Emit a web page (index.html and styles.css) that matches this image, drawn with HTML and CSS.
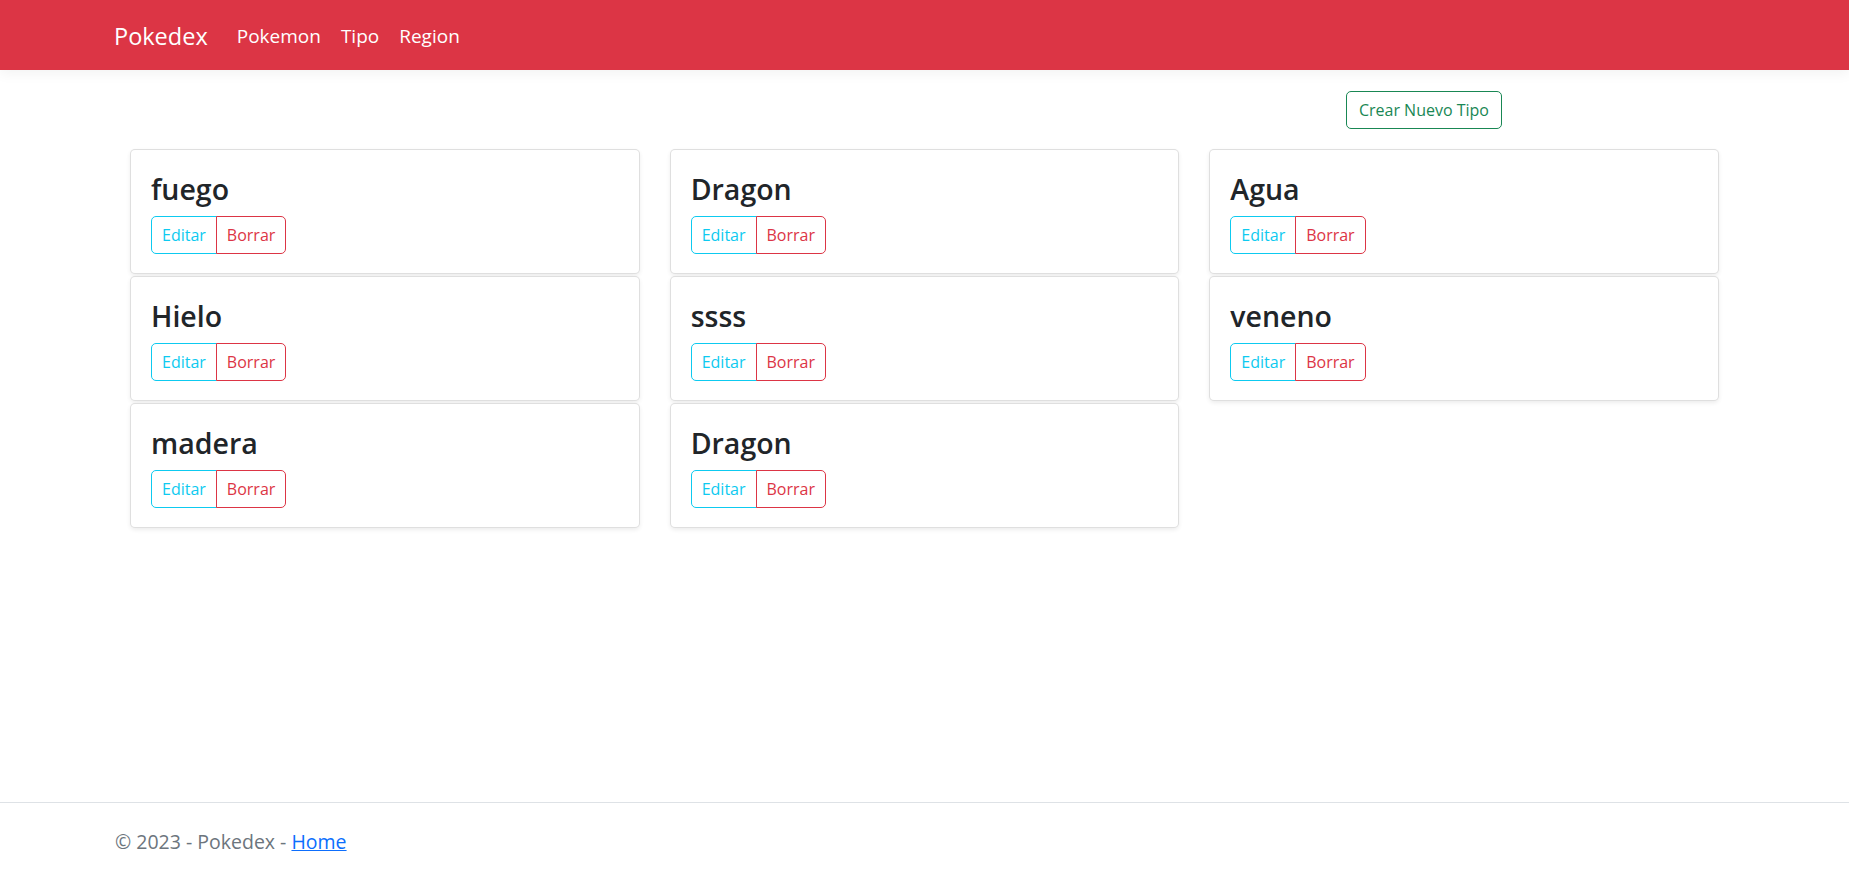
FILE: index.html
```html
<!DOCTYPE html>
<html lang="es">
<head>
<meta charset="utf-8">
<title>Pokedex</title>
<link rel="stylesheet" href="styles.css">
</head>
<body>
<header class="navbar">
  <a class="brand" href="#">Pokedex</a>
  <nav class="nav">
    <a class="nav-link" href="#">Pokemon</a>
    <a class="nav-link" href="#">Tipo</a>
    <a class="nav-link" href="#">Region</a>
  </nav>
</header>
<main class="main">
  <div class="toolbar">
    <a class="btn btn-success" href="#">Crear Nuevo Tipo</a>
  </div>
  <div class="grid">
    <div class="col">
      <div class="card"><h3 class="card-title">fuego</h3><div class="btn-group"><a class="btn btn-info" href="#">Editar</a><a class="btn btn-danger" href="#">Borrar</a></div></div>
      <div class="card"><h3 class="card-title">Hielo</h3><div class="btn-group"><a class="btn btn-info" href="#">Editar</a><a class="btn btn-danger" href="#">Borrar</a></div></div>
      <div class="card"><h3 class="card-title">madera</h3><div class="btn-group"><a class="btn btn-info" href="#">Editar</a><a class="btn btn-danger" href="#">Borrar</a></div></div>
    </div>
    <div class="col">
      <div class="card"><h3 class="card-title">Dragon</h3><div class="btn-group"><a class="btn btn-info" href="#">Editar</a><a class="btn btn-danger" href="#">Borrar</a></div></div>
      <div class="card"><h3 class="card-title">ssss</h3><div class="btn-group"><a class="btn btn-info" href="#">Editar</a><a class="btn btn-danger" href="#">Borrar</a></div></div>
      <div class="card"><h3 class="card-title">Dragon</h3><div class="btn-group"><a class="btn btn-info" href="#">Editar</a><a class="btn btn-danger" href="#">Borrar</a></div></div>
    </div>
    <div class="col">
      <div class="card"><h3 class="card-title">Agua</h3><div class="btn-group"><a class="btn btn-info" href="#">Editar</a><a class="btn btn-danger" href="#">Borrar</a></div></div>
      <div class="card"><h3 class="card-title">veneno</h3><div class="btn-group"><a class="btn btn-info" href="#">Editar</a><a class="btn btn-danger" href="#">Borrar</a></div></div>
    </div>
  </div>
</main>
<footer class="footer">
  <span>&copy; 2023 - Pokedex - <a class="footer-link" href="#">Home</a></span>
</footer>
</body>
</html>
```
FILE: styles.css
```css
* { box-sizing: border-box; }
html, body { margin: 0; padding: 0; }
body {
  font-family: "Segoe UI", "Open Sans", "Noto Sans", sans-serif;
  font-size: 16px;
  color: #212529;
  background: #fff;
  min-height: 100vh;
  display: flex;
  flex-direction: column;
}
a { text-decoration: none; }

.navbar {
  height: 70px;
  background: #dc3545;
  display: flex;
  align-items: center;
  padding: 2px 0 0 114px;
  box-shadow: 0 4px 12px rgba(0,0,0,.05);
}
.brand {
  color: #fff;
  font-size: 23.5px;
  line-height: 30px;
  margin-right: 19px;
}
.nav { display: flex; }
.nav-link {
  color: #fff;
  font-size: 19px;
  line-height: 28px;
  padding: 4px 10px;
}

.main { flex: 1; }
.toolbar {
  display: flex;
  justify-content: flex-end;
  padding: 21px 347px 0 0;
}
.grid {
  display: grid;
  grid-template-columns: repeat(3, 1fr);
  column-gap: 30px;
  padding: 20px 130px 0;
  align-items: start;
}
.col {
  display: flex;
  flex-direction: column;
  gap: 2px;
}
.card {
  border: 1px solid rgba(0,0,0,.125);
  border-radius: 5px;
  box-shadow: 0 2px 4px rgba(0,0,0,.075);
  padding: 22px 20px 19px;
  background: #fff;
}
.card-title {
  margin: 0 0 10px;
  font-size: 28.5px;
  line-height: 34px;
  font-weight: 600;
  color: #212529;
}

.btn {
  display: inline-block;
  font-size: 16px;
  line-height: 24px;
  padding: 6px 12px;
  border: 1px solid;
  border-radius: 5px;
  background: transparent;
}
.btn-success { color: #198754; border-color: #198754; }
.btn-info { color: #0dcaf0; border-color: #0dcaf0; }
.btn-danger { color: #dc3545; border-color: #dc3545; }
.btn-group { display: inline-flex; }
.btn-group .btn { padding: 6px 10px; }
.btn-group .btn:first-child { border-top-right-radius: 0; border-bottom-right-radius: 0; }
.btn-group .btn + .btn { margin-left: -1px; border-top-left-radius: 0; border-bottom-left-radius: 0; }

.footer {
  border-top: 1px solid #dee2e6;
  color: #6c757d;
  font-size: 19.5px;
  line-height: 60px;
  padding: 9px 0 6px 115px;
  white-space: nowrap;
}
.footer-link { color: #0d6efd; text-decoration: underline; }
```
